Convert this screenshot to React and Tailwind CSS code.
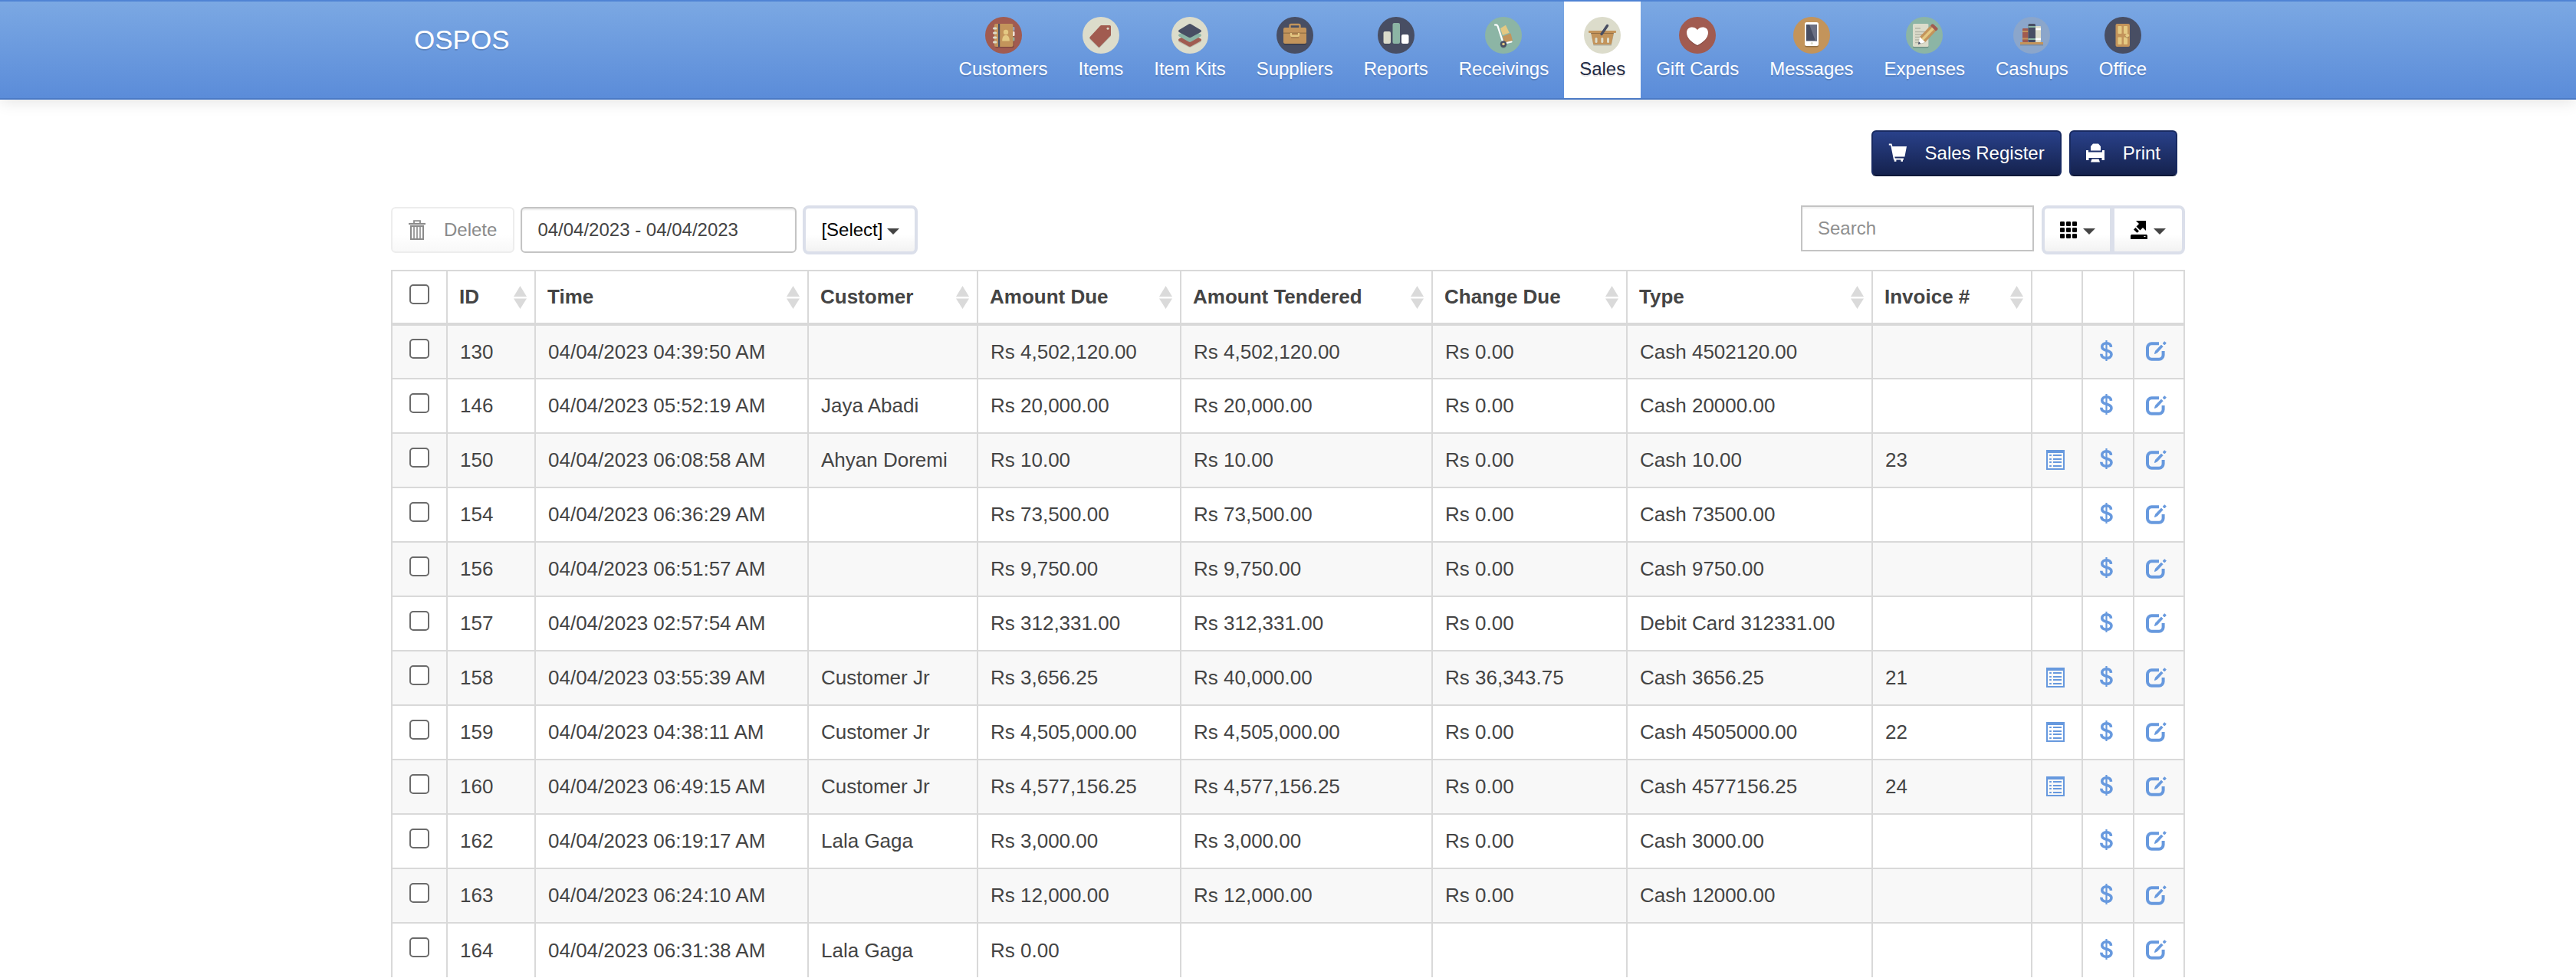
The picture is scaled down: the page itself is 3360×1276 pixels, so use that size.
import React from "react";

const RED = "#a15b50";
const CREAM = "#dcdccb";
const DARK = "#484e63";
const GREEN = "#8cb5a5";
const TAN = "#c3945b";
const SAND = "#e4c983";

function Disc({ color, children }) {
  return (
    <svg viewBox="0 0 48 48" className="block size-12" aria-hidden="true">
      <circle cx="24" cy="24" r="24" fill={color} />
      {children}
    </svg>
  );
}

const modules = [
  {
    name: "Customers",
    icon: (
      <Disc color={RED}>
        <rect x="13" y="10.5" width="24.5" height="30" rx="2" fill="#000" opacity=".2" />
        <rect x="35" y="13" width="3.4" height="5" rx="1" fill="#8aa4c8" />
        <rect x="35" y="19" width="3.4" height="6" rx="1" fill="#fff" />
        <rect x="35" y="26.500" width="3.4" height="5" rx="1" fill={GREEN} />
        <rect x="12" y="9" width="24.500" height="30" rx="2" fill={TAN} />
        <rect x="17" y="9" width="2.200" height="30" fill={DARK} />
        <circle cx="27" cy="20" r="3.200" fill={SAND} />
        <path d="M22.200 31.500c0-5 1.500-7.500 4.800-7.500s4.800 2.500 4.800 7.500z" fill={SAND} />
        {[13.5, 19.5, 25.5, 31.5].map((y) => (
          <rect key={y} x="10" y={y} width="5.400" height="3" rx="1.500" fill={CREAM} />
        ))}
      </Disc>
    ),
  },
  {
    name: "Items",
    icon: (
      <Disc color={CREAM}>
        <path d="M23.500 12h12a1.500 1.500 0 0 1 1.500 1.500V25L22.500 40q-1 1-2 0l-10.700-10.500q-1-1-.2-2z" fill="#000" opacity=".18" />
        <path d="M24.500 11h11a1.500 1.500 0 0 1 1.500 1.500V24L22.500 39q-1 1-2 0L9.800 28.300q-1-1-.2-2L23 11.700q.7-.7 1.500-.7z" fill={RED} />
        <circle cx="33" cy="15.300" r="1.500" fill={CREAM} />
      </Disc>
    ),
  },
  {
    name: "Item Kits",
    icon: (
      <Disc color={CREAM}>
        <path d="M10 30l14-7 14 7q2 1.500 0 3L25.500 39.500q-1.500.8-3 0L10 33q-2-1.500 0-3z" fill="#000" opacity=".15" />
        <path d="M10 28.500l14-7 14 7q2 1.500 0 3L25.500 38.500q-1.500.8-3 0L10 31.500q-2-1.500 0-3z" fill={RED} />
        <path d="M10 22.500l14-7 14 7q2 1.500 0 3L25.500 32.500q-1.500.8-3 0L10 25.500q-2-1.500 0-3z" fill={GREEN} />
        <path d="M10 17l12.500-7.500q1.500-.8 3 0L38 17q2 1.500 0 3L25.500 26.800q-1.500.8-3 0L10 20q-2-1.500 0-3z" fill={DARK} />
      </Disc>
    ),
  },
  {
    name: "Suppliers",
    icon: (
      <Disc color={DARK}>
        <rect x="17.500" y="10" width="13" height="7" rx="1.500" fill="none" stroke={TAN} strokeWidth="2.400" />
        <rect x="9" y="15.500" width="30" height="21" rx="2" fill="#000" opacity=".25" />
        <rect x="9" y="14" width="30" height="21" rx="2" fill={TAN} />
        <rect x="9" y="20.500" width="30" height="1.400" fill="#000" opacity=".22" />
        <path d="M19 21v3q0 1 1 1h8q1 0 1-1v-3" fill="none" stroke={SAND} strokeWidth="2.200" />
        <path d="M19 27.200h10" stroke="#000" strokeOpacity=".25" />
      </Disc>
    ),
  },
  {
    name: "Reports",
    icon: (
      <Disc color={DARK}>
        <rect x="7.500" y="20" width="9.500" height="16" rx="2" fill="#000" opacity=".2" />
        <rect x="7.500" y="19" width="9.500" height="16" rx="2" fill={CREAM} />
        <rect x="19.500" y="8" width="9.500" height="27" rx="2" fill={GREEN} />
        <rect x="31" y="23" width="9.500" height="12" rx="2" fill="#fff" />
      </Disc>
    ),
  },
  {
    name: "Receivings",
    icon: (
      <Disc color={GREEN}>
        <path d="M20 15l7-4.300 4.700 10L23 24z" fill={SAND} />
        <path d="M23 25.500l10.500-4L36 31l-11 2.700z" fill={TAN} />
        <path d="M13 10.500q2.500-.8 3.500 1.500l6.500 20M26 34.500l8.500-2" fill="none" stroke="#fff" strokeWidth="2.200" strokeLinecap="round" />
        <circle cx="24" cy="36.800" r="4.200" fill="#000" opacity=".2" />
        <circle cx="24" cy="35.500" r="4.200" fill={DARK} />
        <circle cx="24" cy="35.500" r="1.800" fill={SAND} />
      </Disc>
    ),
  },
  {
    name: "Sales",
    active: true,
    icon: (
      <Disc color={CREAM}>
        <path d="M9.500 22h29.500l-3.300 15.500H12.500z" fill="#000" opacity=".2" />
        <path d="M9 20h30l-3.300 16H12.300z" fill={TAN} />
        <rect x="6" y="18" width="36" height="3" rx="1" fill={TAN} />
        <rect x="9" y="21" width="30" height="1" fill="#000" opacity=".25" />
        {[16, 23.8, 31.5].map((x) => (
          <rect key={x} x={x - 1.5} y="27" width="3" height="7" rx="1.500" fill={CREAM} />
        ))}
        <path d="M30.500 11.500L23 22.500" stroke={DARK} strokeWidth="3.400" strokeLinecap="round" />
      </Disc>
    ),
  },
  {
    name: "Gift Cards",
    icon: (
      <Disc color={RED}>
        <path d="M24 38.500C16 34 10 28.500 10 21.500c0-7.500 9.500-9.500 14-3.500 4.500-6 14-4 14 3.500 0 7-6 12.500-14 17z" fill="#000" opacity=".18" />
        <path d="M24 37C16 33 10 27.500 10 20.500c0-7.500 9.500-9.500 14-3.500 4.500-6 14-4 14 3.500 0 7-6 12.500-14 16.500z" fill="#fff" />
      </Disc>
    ),
  },
  {
    name: "Messages",
    icon: (
      <Disc color={TAN}>
        <rect x="15" y="8.500" width="18" height="31" rx="2.500" fill="#000" opacity=".25" />
        <rect x="15" y="7" width="18" height="31" rx="2.500" fill="#fff" />
        <rect x="17" y="10" width="14" height="21.500" fill={DARK} />
        <path d="M21 10h10v21.500h-2z" fill="#6b7084" />
        <circle cx="24.300" cy="34.500" r="1.600" fill={CREAM} />
      </Disc>
    ),
  },
  {
    name: "Expenses",
    icon: (
      <Disc color={GREEN}>
        <rect x="9" y="10.500" width="20.500" height="30" rx="1.500" fill="#000" opacity=".2" />
        <rect x="9" y="9" width="20.500" height="30" rx="1.500" fill={CREAM} />
        <path d="M12 15h7M12 19.500h14M12 23h14M12 26.500h8M12 30h6M12 33.500h5" stroke="#b3b4a6" strokeWidth="1.400" />
        <path d="M16 36.500l2-9 16-18 7 6.500-16.500 18z" fill="#000" opacity=".12" />
        <path d="M18 26l14-14.500 7 7L25 33z" fill={TAN} />
        <path d="M20.300 28.300l14-14.500 2.400 2.400-14 14.500z" fill={SAND} />
        <path d="M18 26l7 7-8.500 2.500z" fill="#fff" />
        <path d="M16.800 32l-1 4 3.500-1.200z" fill={DARK} />
        <path d="M32 11.500l1.500-1.700q1.300-1.300 2.600 0l5 4.800q1.200 1.300 0 2.400L39 18.500z" fill={RED} />
      </Disc>
    ),
  },
  {
    name: "Cashups",
    icon: (
      <Disc color="#8ba6cb">
        <rect x="12" y="15" width="7.500" height="18" rx="1" fill={RED} />
        <path d="M12 19h7.500M12 28.500h7.500" stroke={TAN} strokeWidth="2" />
        <rect x="19.500" y="9" width="9.500" height="24" rx="1.500" fill={DARK} />
        <path d="M19.500 13h9.500M19.500 29h9.500" stroke={GREEN} strokeWidth="2" />
        <rect x="29" y="12" width="7" height="21" rx="1" fill={CREAM} />
        <path d="M29 16h7M29 29h7" stroke="#fff" strokeWidth="2.500" />
        <rect x="9" y="34.500" width="30" height="3" fill="#000" opacity=".15" />
        <rect x="9" y="33" width="30" height="3" fill={TAN} />
      </Disc>
    ),
  },
  {
    name: "Office",
    icon: (
      <Disc color={DARK}>
        <rect x="14.500" y="9" width="18.500" height="30" rx="2" fill={TAN} />
        <rect x="17.500" y="12" width="5" height="10" rx=".8" fill={SAND} />
        <rect x="25" y="12" width="5" height="10" rx=".8" fill={SAND} />
        <rect x="17.500" y="26.500" width="5" height="9.500" rx=".8" fill={SAND} />
        <rect x="25" y="26.500" width="5" height="9.500" rx=".8" fill={SAND} />
        <circle cx="29.700" cy="25.500" r="2.400" fill="#000" opacity=".2" />
        <circle cx="29.700" cy="24.300" r="2.400" fill={SAND} />
      </Disc>
    ),
  },
];

function CartIcon() {
  return (
    <svg viewBox="0 0 24 26" className="block h-[26px] w-6" fill="currentColor" aria-hidden="true">
      <path d="M.8.500h3.600l1 3.500H24l-2.600 13.500H8.300l.4 2H20v2h-1v2.300h-2.600V21.500h-6V23.800H7.800V21.500H7L3.200 2.500H.8z" />
    </svg>
  );
}

function PrinterIcon() {
  return (
    <svg viewBox="0 0 24 26" className="block h-[26px] w-6" fill="currentColor" aria-hidden="true">
      <path d="M9 .5h7l3 3.500v5.500H6V4z" />
      <path d="M0 9h3v2.500h18V9h3v13h-3.500v-3h-17v3H0z" />
      <path d="M7.500 20.500h9l1.500 4H6z" />
    </svg>
  );
}

function TrashIcon() {
  return (
    <svg viewBox="0 0 22 26" className="block h-[26px] w-[22px]" fill="none" stroke="currentColor" aria-hidden="true">
      <path d="M0 5h22" strokeWidth="2.200" />
      <path d="M7 4V1.200h8V4" strokeWidth="1.800" />
      <path d="M3 8v17h16V8z" strokeWidth="2" />
      <path d="M7 8v17M11 8v17M15 8v17" strokeWidth="1.600" />
    </svg>
  );
}

function GridIcon() {
  return (
    <svg viewBox="0 0 22 22" className="block size-[22px]" fill="currentColor" aria-hidden="true">
      {[0, 8, 16].map((y) => [0, 8, 16].map((x) => <rect key={`${x}-${y}`} x={x} y={y} width="6" height="6" rx="1.200" />))}
    </svg>
  );
}

function ExportIcon() {
  return (
    <svg viewBox="0 0 22 24" className="block h-6 w-[22px]" fill="currentColor" aria-hidden="true">
      <path d="M7 0h13v13l-4-4-3.500 3.500-5-5L11 4z" />
      <path d="M6.500 9l4.500 4.500-2.500 2.200L4 11.500z" />
      <path fillRule="evenodd" d="M1 18h20l1 1.500V24H0v-4.500zM17.500 20v1h2v-1z" />
    </svg>
  );
}

function Caret({ className = "" }) {
  return (
    <svg viewBox="0 0 16 8" className={`block h-2 w-4 ${className}`} fill="#444" aria-hidden="true">
      <path d="M0 0h16L8 8z" />
    </svg>
  );
}

function SortIcon() {
  return (
    <svg viewBox="0 0 17 30" className="block h-[30px] w-[17px] shrink-0" fill="#dadada" aria-hidden="true">
      <path d="M8.500 0L17 14H0zM0 16.500h17L8.500 30z" />
    </svg>
  );
}

function ListIcon() {
  return (
    <svg viewBox="0 0 24 26" className="block h-[26px] w-6" fill="currentColor" aria-hidden="true">
      <path fillRule="evenodd" d="M0 0h24v26H0zM2 4v20h20V4z" />
      {[6, 11, 15, 20].map((y) => (
        <React.Fragment key={y}>
          <rect x="4" y={y} width="3" height="2" rx=".8" />
          <rect x="9" y={y} width="11" height="2" />
        </React.Fragment>
      ))}
    </svg>
  );
}

function DollarIcon() {
  return (
    <svg viewBox="0 0 17 27" className="block h-[27px] w-[17px]" fill="none" stroke="currentColor" aria-hidden="true">
      <path d="M8.500 0v27" strokeWidth="2.200" />
      <path d="M14.500 8.800C14.300 5.500 12 3.800 8.500 3.800c-3.500 0-5.700 1.800-5.700 4.600 0 6.500 12.200 3.400 12.200 10 0 3-2.600 4.800-6.400 4.800-4.100 0-6.800-2-6.800-5.500" strokeWidth="3.600" />
    </svg>
  );
}

function EditIcon() {
  return (
    <svg viewBox="0 0 27 26" className="block h-[26px] w-[27px]" fill="none" stroke="currentColor" aria-hidden="true">
      <path d="M17 3.200H7.500A5.500 5.500 0 0 0 2 8.700v9.600a5.500 5.500 0 0 0 5.500 5.500h9.600a5.500 5.500 0 0 0 5.500-5.500V13" strokeWidth="4" />
      <path d="M11.500 16.500l1-3.500L20 5.200l2 2-7.500 8z" fill="currentColor" strokeWidth="1" />
      <path d="M22.300 3l2-2.300 2 2-2 2.300z" fill="currentColor" strokeWidth="1" />
    </svg>
  );
}

const columns = ["ID", "Time", "Customer", "Amount Due", "Amount Tendered", "Change Due", "Type", "Invoice #"];

const sales = [
  ["130", "04:39:50", "", "Rs 4,502,120.00", "Rs 4,502,120.00", "Rs 0.00", "Cash 4502120.00", ""],
  ["146", "05:52:19", "Jaya Abadi", "Rs 20,000.00", "Rs 20,000.00", "Rs 0.00", "Cash 20000.00", ""],
  ["150", "06:08:58", "Ahyan Doremi", "Rs 10.00", "Rs 10.00", "Rs 0.00", "Cash 10.00", "23"],
  ["154", "06:36:29", "", "Rs 73,500.00", "Rs 73,500.00", "Rs 0.00", "Cash 73500.00", ""],
  ["156", "06:51:57", "", "Rs 9,750.00", "Rs 9,750.00", "Rs 0.00", "Cash 9750.00", ""],
  ["157", "02:57:54", "", "Rs 312,331.00", "Rs 312,331.00", "Rs 0.00", "Debit Card 312331.00", ""],
  ["158", "03:55:39", "Customer Jr", "Rs 3,656.25", "Rs 40,000.00", "Rs 36,343.75", "Cash 3656.25", "21"],
  ["159", "04:38:11", "Customer Jr", "Rs 4,505,000.00", "Rs 4,505,000.00", "Rs 0.00", "Cash 4505000.00", "22"],
  ["160", "06:49:15", "Customer Jr", "Rs 4,577,156.25", "Rs 4,577,156.25", "Rs 0.00", "Cash 4577156.25", "24"],
  ["162", "06:19:17", "Lala Gaga", "Rs 3,000.00", "Rs 3,000.00", "Rs 0.00", "Cash 3000.00", ""],
  ["163", "06:24:10", "", "Rs 12,000.00", "Rs 12,000.00", "Rs 0.00", "Cash 12000.00", ""],
  ["164", "06:31:38", "Lala Gaga", "Rs 0.00", "", "", "", ""],
];

function Check({ label }) {
  return (
    <input
      type="checkbox"
      aria-label={label}
      className="mb-2 block size-[26px] appearance-none rounded-[5px] border-2 border-[#6b6b6b] bg-white checked:bg-[#6799de]"
    />
  );
}

const navy =
  "flex h-[60px] items-center gap-6 rounded-md border-2 border-[#182a61] border-b-[#0d1738] bg-gradient-to-b from-[#29418a] to-[#15224e] px-5 text-white [text-shadow:0_-1px_0_rgba(0,0,0,0.2)]";
const pale = "bg-gradient-to-b from-white from-60% to-[#f2f2f2] border-[#dbdfea] text-black";

export default function App() {
  return (
    <div className="bg-white font-['Liberation_Sans',Arial,sans-serif] text-2xl text-[#444]">
      <header className="border-y-2 border-t-[#4f83d4] border-b-[#4b7ac5] bg-gradient-to-b from-[#7ba8e3] to-[#5b8cd9] shadow-[0_2px_20px_rgba(0,0,0,0.12)]">
        <div className="mx-auto flex h-[126px] max-w-[2280px] justify-between text-white">
          <a href="#home" className="mt-7 text-[35px] leading-[44px] [text-shadow:0_2px_0_rgba(0,0,0,0.15)]">
            OSPOS
          </a>
          <nav className="flex">
            {modules.map((m) => (
              <a
                key={m.name}
                href={`#${m.name.toLowerCase().replace(" ", "-")}`}
                aria-current={m.active ? "page" : undefined}
                className={
                  m.active
                    ? "flex flex-col items-center gap-0.5 bg-white px-5 pt-5 text-[#1f2a44] [text-shadow:0_2px_0_rgba(0,0,0,0.1)]"
                    : "flex flex-col items-center gap-0.5 px-5 pt-5 [text-shadow:0_2px_0_rgba(0,0,0,0.15)]"
                }
              >
                {m.icon}
                <span className="leading-9">{m.name}</span>
              </a>
            ))}
          </nav>
        </div>
      </header>

      <main className="mx-auto max-w-[2340px]">
        <div className="flex justify-end gap-[10px] pt-10 pr-[10px]">
          <button type="button" className={navy}>
            <CartIcon />
            Sales Register
          </button>
          <button type="button" className={navy}>
            <PrinterIcon />
            Print
          </button>
        </div>

        <div className="mt-[38px] flex items-start">
          <button
            type="button"
            disabled
            className="mt-[2px] flex h-[60px] items-center gap-6 rounded-md border-2 border-[#ededed] bg-gradient-to-b from-white from-60% to-[#f8f8f8] px-[21px] text-[#8a8a8a]"
          >
            <TrashIcon />
            Delete
          </button>
          <input
            type="text"
            aria-label="Date range"
            defaultValue="04/04/2023 - 04/04/2023"
            className="mt-[2px] ml-2 h-[60px] w-[360px] rounded-md border-2 border-[#c4c4c4] px-5 shadow-[inset_0_2px_2px_rgba(0,0,0,0.08)]"
          />
          <div className="relative ml-2">
            <select
              aria-label="Filter"
              className={`block h-16 w-[150px] appearance-none rounded-lg border-4 pl-5 ${pale}`}
            >
              <option>[Select]</option>
            </select>
            <Caret className="pointer-events-none absolute top-[30px] right-6" />
          </div>
          <input
            type="text"
            aria-label="Search"
            placeholder="Search"
            className="ml-auto h-[60px] w-[304px] border-2 border-[#c4c4c4] px-5 shadow-[inset_0_2px_2px_rgba(0,0,0,0.06)] placeholder:text-[#8f8f8f]"
          />
          <div className="ml-[10px] flex">
            <button
              type="button"
              aria-label="Columns"
              aria-haspopup="menu"
              className={`flex h-16 w-[91px] items-center justify-center gap-2 rounded-l-lg border-4 border-r-2 ${pale}`}
            >
              <GridIcon />
              <Caret className="mt-1" />
            </button>
            <button
              type="button"
              aria-label="Export"
              aria-haspopup="menu"
              className={`flex h-16 w-24 items-center justify-center gap-2 rounded-r-lg border-4 ${pale}`}
            >
              <ExportIcon />
              <Caret className="mt-1" />
            </button>
          </div>
        </div>

        <table className="mt-5 w-full table-fixed border-collapse border-2 border-b-0 border-[#d9d9d9] text-[26px] leading-[37px]">
          <colgroup>
            <col className="w-[72px]" />
            <col className="w-[115px]" />
            <col className="w-[356px]" />
            <col className="w-[221px]" />
            <col className="w-[265px]" />
            <col className="w-[328px]" />
            <col className="w-[254px]" />
            <col className="w-[320px]" />
            <col className="w-[208px]" />
            <col className="w-[66px]" />
            <col className="w-[67px]" />
            <col className="w-[66px]" />
          </colgroup>
          <thead>
            <tr className="h-[70px] border-b-4 border-[#d9d9d9]">
              <th className="border-x-2 border-[#d9d9d9] pl-[22px]">
                <Check label="Select all" />
              </th>
              {columns.map((c) => (
                <th key={c} scope="col" className="border-x-2 border-[#d9d9d9] pr-[10px] pl-[15px] text-left font-bold">
                  <button type="button" className="flex w-full items-center justify-between whitespace-nowrap">
                    {c}
                    <SortIcon />
                  </button>
                </th>
              ))}
              <th className="border-x-2 border-[#d9d9d9]" />
              <th className="border-x-2 border-[#d9d9d9]" />
              <th className="border-x-2 border-[#d9d9d9]" />
            </tr>
          </thead>
          <tbody>
            {sales.map(([id, time, ...rest]) => (
              <tr key={id} className="h-[71px] border-b-2 border-[#d9d9d9] odd:bg-[#f8f8f8] last:border-b-0">
                <td className="border-x-2 border-[#d9d9d9] pl-[22px]">
                  <Check label={`Select sale ${id}`} />
                </td>
                {[id, `04/04/2023 ${time} AM`, ...rest].map((value, i) => (
                  <td key={i} className="border-x-2 border-[#d9d9d9] pl-4 whitespace-nowrap">
                    {value}
                  </td>
                ))}
                <td className="border-x-2 border-[#d9d9d9] pl-[18px] text-[#6799de]">
                  {rest[5] && (
                    <a href={`#invoice-${id}`} aria-label="Show invoice" className="mb-0.5 block">
                      <ListIcon />
                    </a>
                  )}
                </td>
                <td className="border-x-2 border-[#d9d9d9] pl-[22px] text-[#6799de]">
                  <a href={`#receipt-${id}`} aria-label="Show receipt" className="mb-1 block">
                    <DollarIcon />
                  </a>
                </td>
                <td className="border-x-2 border-[#d9d9d9] pl-[15px] text-[#6799de]">
                  <a href={`#edit-${id}`} aria-label="Edit sale" className="mb-0.5 block">
                    <EditIcon />
                  </a>
                </td>
              </tr>
            ))}
          </tbody>
        </table>
      </main>
    </div>
  );
}
